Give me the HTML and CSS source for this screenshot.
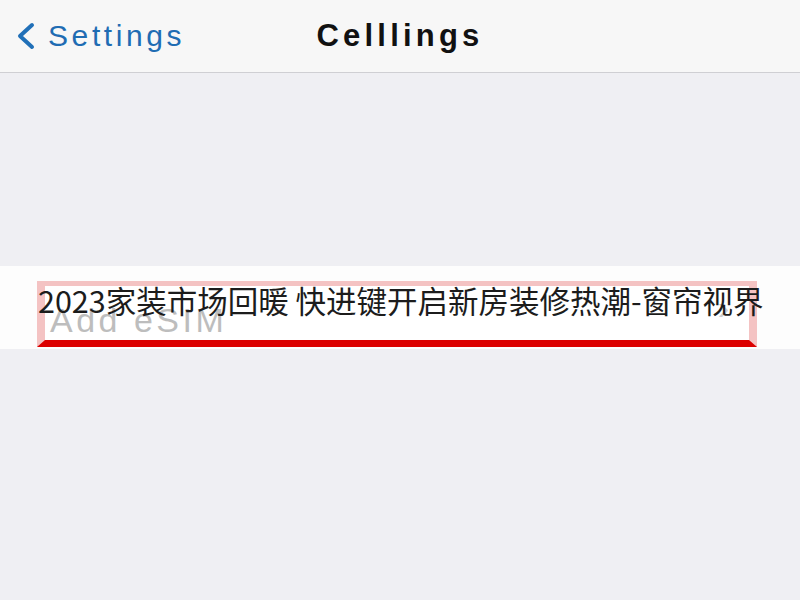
FILE: index.html
```html
<!DOCTYPE html>
<html lang="zh-CN">
<head>
    <meta charset="UTF-8">
    <meta name="viewport" content="width=device-width, initial-scale=1.0">
    <title>Celllings</title>
    <link rel="stylesheet" href="styles.css">
</head>
<body>
    <header class="nav">
        <a class="nav-back" href="#">
            <svg width="22" height="28" viewBox="0 0 22 28" fill="none" stroke="#2170b8" stroke-width="4" stroke-linecap="round" stroke-linejoin="round">
                <polyline points="17 3 5 14 17 25"></polyline>
            </svg>
            <span>Settings</span>
        </a>
        <h1 class="nav-title">Celllings</h1>
        <div></div>
    </header>

    <main class="content">
        <div class="row">
            <div class="highlight">
                <span class="ghost-label">Add eSIM</span>
                <span class="ghost-chevron">&rsaquo;</span>
            </div>
            <p class="caption">2023家装市场回暖 快进键开启新房装修热潮-窗帘视界</p>
        </div>
    </main>
</body>
</html>
```

FILE: styles.css
```css
body {
    margin: 0;
    font-family: "Liberation Sans", "Noto Sans", sans-serif;
    background-color: #efeff3;
    min-height: 600px;
}

.nav {
    height: 72px;
    display: grid;
    grid-template-columns: 1fr auto 1fr;
    align-items: center;
    background-color: #f7f7f7;
    border-bottom: 1px solid #cfcfd3;
}

.nav-back {
    display: flex;
    align-items: center;
    gap: 11px;
    padding-left: 15px;
    color: #1f6cb3;
    text-decoration: none;
    font-size: 30px;
    letter-spacing: 3.6px;
}

.nav-back svg {
    flex-shrink: 0;
}

.nav-title {
    margin: 0;
    font-size: 31px;
    font-weight: bold;
    letter-spacing: 4.2px;
    color: #111;
}

.content {
    padding-top: 193px;
}

.row {
    position: relative;
    background-color: #fdfdfd;
    padding: 15px 43px 2px 37px;
}

.highlight {
    position: relative;
    height: 54px;
    border: 8px solid #f4c3c3;
    border-top-width: 5px;
    border-bottom: 7px solid #dc0000;
    background-color: #fff;
}

.ghost-label {
    position: absolute;
    left: 5px;
    top: 15px;
    font-size: 34px;
    letter-spacing: 3.5px;
    color: #bdbdbd;
}

.ghost-chevron {
    position: absolute;
    right: 20px;
    top: 2px;
    font-size: 34px;
    color: #cccccc;
}

.caption {
    position: absolute;
    left: 38px;
    top: 14px;
    margin: 0;
    font-family: "Noto Sans CJK SC", "Noto Sans", sans-serif;
    font-size: 30.5px;
    line-height: 40px;
    color: #1c1c1c;
    white-space: nowrap;
}
```
